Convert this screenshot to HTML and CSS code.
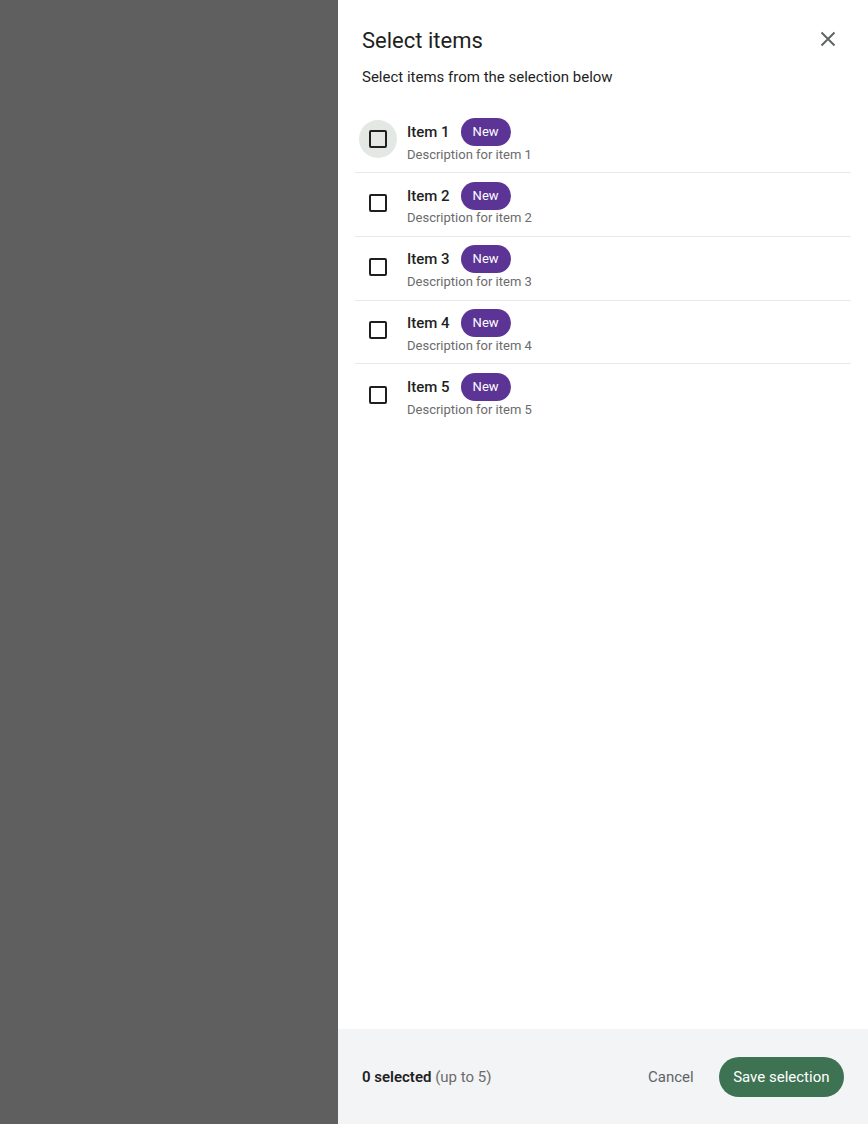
FILE: index.html
```html
<!DOCTYPE html>
<html>
<head>
<meta charset="utf-8">
<link rel="stylesheet" href="styles.css">
</head>
<body>
<div class="scrim"></div>
<aside class="panel">
  <header class="head">
    <div class="title-row">
      <h1 class="title">Select items</h1>
      <button class="close" aria-label="Close">
        <svg width="24" height="24" viewBox="0 0 24 24"><path d="M5.5 5.5 L18.5 18.5 M18.5 5.5 L5.5 18.5" stroke="#5f6663" stroke-width="2" fill="none"/></svg>
      </button>
    </div>
    <p class="subtitle">Select items from the selection below</p>
  </header>
  <ul class="list">
    <li class="row"><span class="cb-wrap hover"><span class="cb"></span></span><div class="txt"><div class="name-line"><span class="name">Item 1</span><span class="badge">New</span></div><div class="desc">Description for item 1</div></div></li>
    <li class="row"><span class="cb-wrap"><span class="cb"></span></span><div class="txt"><div class="name-line"><span class="name">Item 2</span><span class="badge">New</span></div><div class="desc">Description for item 2</div></div></li>
    <li class="row"><span class="cb-wrap"><span class="cb"></span></span><div class="txt"><div class="name-line"><span class="name">Item 3</span><span class="badge">New</span></div><div class="desc">Description for item 3</div></div></li>
    <li class="row"><span class="cb-wrap"><span class="cb"></span></span><div class="txt"><div class="name-line"><span class="name">Item 4</span><span class="badge">New</span></div><div class="desc">Description for item 4</div></div></li>
    <li class="row last"><span class="cb-wrap"><span class="cb"></span></span><div class="txt"><div class="name-line"><span class="name">Item 5</span><span class="badge">New</span></div><div class="desc">Description for item 5</div></div></li>
  </ul>
  <footer class="foot">
    <div class="count"><b>0 selected</b> <span class="limit">(up to 5)</span></div>
    <div class="actions">
      <button class="cancel">Cancel</button>
      <button class="save">Save selection</button>
    </div>
  </footer>
</aside>
</body>
</html>
```
FILE: styles.css
```css
* { box-sizing: border-box; }
html, body { margin: 0; padding: 0; height: 100%; }
body {
  display: flex;
  font-family: Roboto, "Open Sans", "Liberation Sans", sans-serif;
  color: #1f1f1f;
  background: #5f5f5f;
}
.scrim { flex: 1; background: #5f5f5f; }
.panel {
  width: 530px;
  height: 1124px;
  background: #fff;
  display: flex;
  flex-direction: column;
}
.head { padding: 25px 24px 0 24px; }
.title-row { display: flex; justify-content: space-between; align-items: center; }
.title { margin: 0; font-size: 22px; font-weight: 400; line-height: 32px; color: #1f1f1f; }
.close { border: 0; background: none; padding: 0; width: 24px; height: 24px; margin-right: 4px; margin-top: -4px; cursor: pointer; }
.close svg { display: block; }
.subtitle { margin: 9px 0 0 0; font-size: 15px; line-height: 22px; color: #1f1f1f; }
.list { list-style: none; margin: 21.5px 17px 0 17px; padding: 0; flex: 1; }
.row {
  display: flex;
  align-items: center;
  height: 63.7px;
  border-bottom: 1px solid #e6e8ea;
  padding-left: 4px;
}
.row.last { border-bottom: 0; }
.cb-wrap {
  width: 38px; height: 38px; border-radius: 50%;
  display: flex; align-items: center; justify-content: center;
  margin-top: -3px;
  flex: none;
}
.cb-wrap.hover { background: #e3e8e5; }
.cb { width: 18px; height: 18px; border: 2px solid #1f1f1f; border-radius: 2px; }
.txt { margin-left: 10px; display: flex; flex-direction: column; }
.name-line { display: flex; align-items: center; }
.name { font-size: 15px; font-weight: 500; color: #1f1f1f; }
.badge {
  margin-left: 11px;
  background: #5b3496;
  color: #fff;
  font-size: 13px;
  font-weight: 400;
  height: 28px;
  line-height: 28px;
  padding: 0 12px;
  border-radius: 14px;
}
.desc { font-size: 13px; color: #6b6b6b; letter-spacing: 0; margin-top: -0.5px; line-height: 18px; }
.foot {
  height: 95px;
  background: #f3f4f6;
  display: flex;
  align-items: center;
  justify-content: space-between;
  padding: 0 24px;
}
.count { font-size: 15px; color: #1f1f1f; }
.count b { font-weight: 600; }
.limit { color: #6b6b6b; }
.actions { display: flex; align-items: center; gap: 25px; }
.cancel { border: 0; background: none; font: inherit; font-size: 15px; color: #5f6368; padding: 0; cursor: pointer; }
.save {
  border: 0; background: #3d7353; color: #fff;
  font: inherit; font-size: 15px;
  height: 40px; padding: 0 14.5px; border-radius: 20px; cursor: pointer;
}
```
